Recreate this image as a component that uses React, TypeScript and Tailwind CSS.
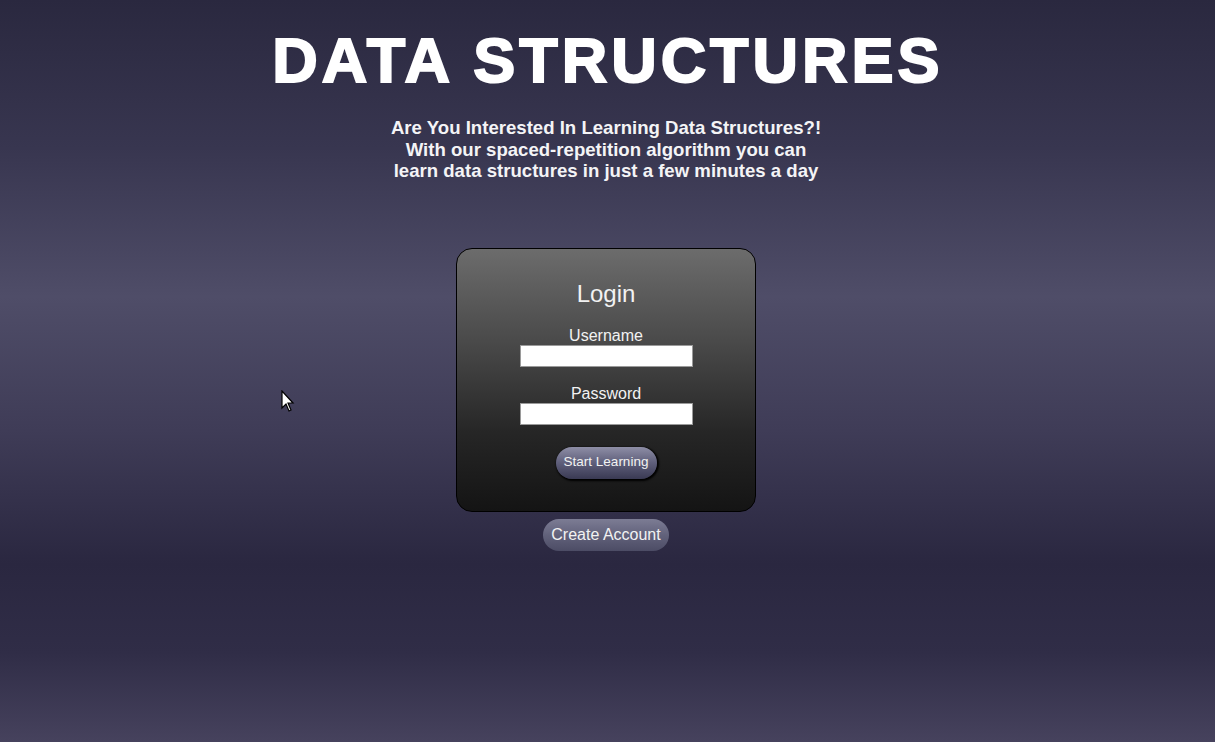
import { useState } from "react";

/* LOGIN PAGE */

export default function App() {

  const [username, setUsername] = useState("");
  const [password, setPassword] = useState("");

  return (

<div className="relative min-h-[742px] w-full overflow-hidden pr-[3px] text-white font-['Liberation_Sans',Arial,sans-serif] bg-[linear-gradient(to_bottom,#2a283f_0%,#383650_20%,#4f4d68_40%,#3f3c57_58%,#2a2740_76%,#302d47_88%,#46425d_100%)]">

{/* HEADER */}

<div className="flex flex-col items-center">

<h1 className="mt-[22px] pl-[4px] text-[63px] leading-[76px] font-bold tracking-[4px] [-webkit-text-stroke:2px_white]">
DATA STRUCTURES
</h1>

<div className="mt-[19px] text-center text-[18.6px] leading-[21.5px] font-bold text-[#f4f4f6]">
<p>Are You Interested In Learning Data Structures?!</p>
<p>With our spaced-repetition algorithm you can</p>
<p>learn data structures in just a few minutes a day</p>
</div>

</div>

{/* LOGIN CARD */}

<div className="mt-[66px] flex flex-col items-center">

<form
onSubmit={(e) => e.preventDefault()}
className="w-[300px] h-[264px] rounded-[16px] border border-black bg-[linear-gradient(to_bottom,#6c6c6c_0%,#4a4a4a_35%,#262626_70%,#141414_100%)] flex flex-col items-center pt-[31px]"
>

<h2 className="text-[24px] leading-[28px] text-[#f2f2f2]">Login</h2>

<label className="mt-[19px] text-[16px] leading-[18px] text-[#f2f2f2]">Username</label>
<input
value={username}
onChange={(e) => setUsername(e.target.value)}
className="w-[173px] h-[22px] bg-white border border-[#9a9a9a] text-black text-sm px-1 outline-none"
/>

<label className="mt-[18px] text-[16px] leading-[18px] text-[#f2f2f2]">Password</label>
<input
type="password"
value={password}
onChange={(e) => setPassword(e.target.value)}
className="w-[173px] h-[22px] bg-white border border-[#9a9a9a] text-black text-sm px-1 outline-none"
/>

<button
type="submit"
className="mt-[22px] w-[101px] h-[32px] rounded-full text-[13.5px] text-[#f2f2f2] bg-[linear-gradient(to_bottom,#8e8ea6_0%,#5e5e7a_50%,#3a3a53_100%)] shadow-[1px_1px_2px_1px_#000]"
>
Start Learning
</button>

</form>

<button
className="mt-[7px] w-[126px] h-[32px] rounded-full text-[16px] text-[#f2f2f2] bg-[linear-gradient(to_bottom,#7c7c94_0%,#62627b_50%,#4c4c65_100%)]"
>
Create Account
</button>

</div>

{/* CURSOR */}

<svg className="absolute left-[281px] top-[390px]" width="14" height="24" viewBox="0 0 14 24">
<path d="M1 1 L1 18 L5 14 L8 21 L10 20 L7 13 L12 13 Z" fill="#fff" stroke="#000" strokeWidth="1.2" strokeLinejoin="miter" />
</svg>

</div>

  );

}
